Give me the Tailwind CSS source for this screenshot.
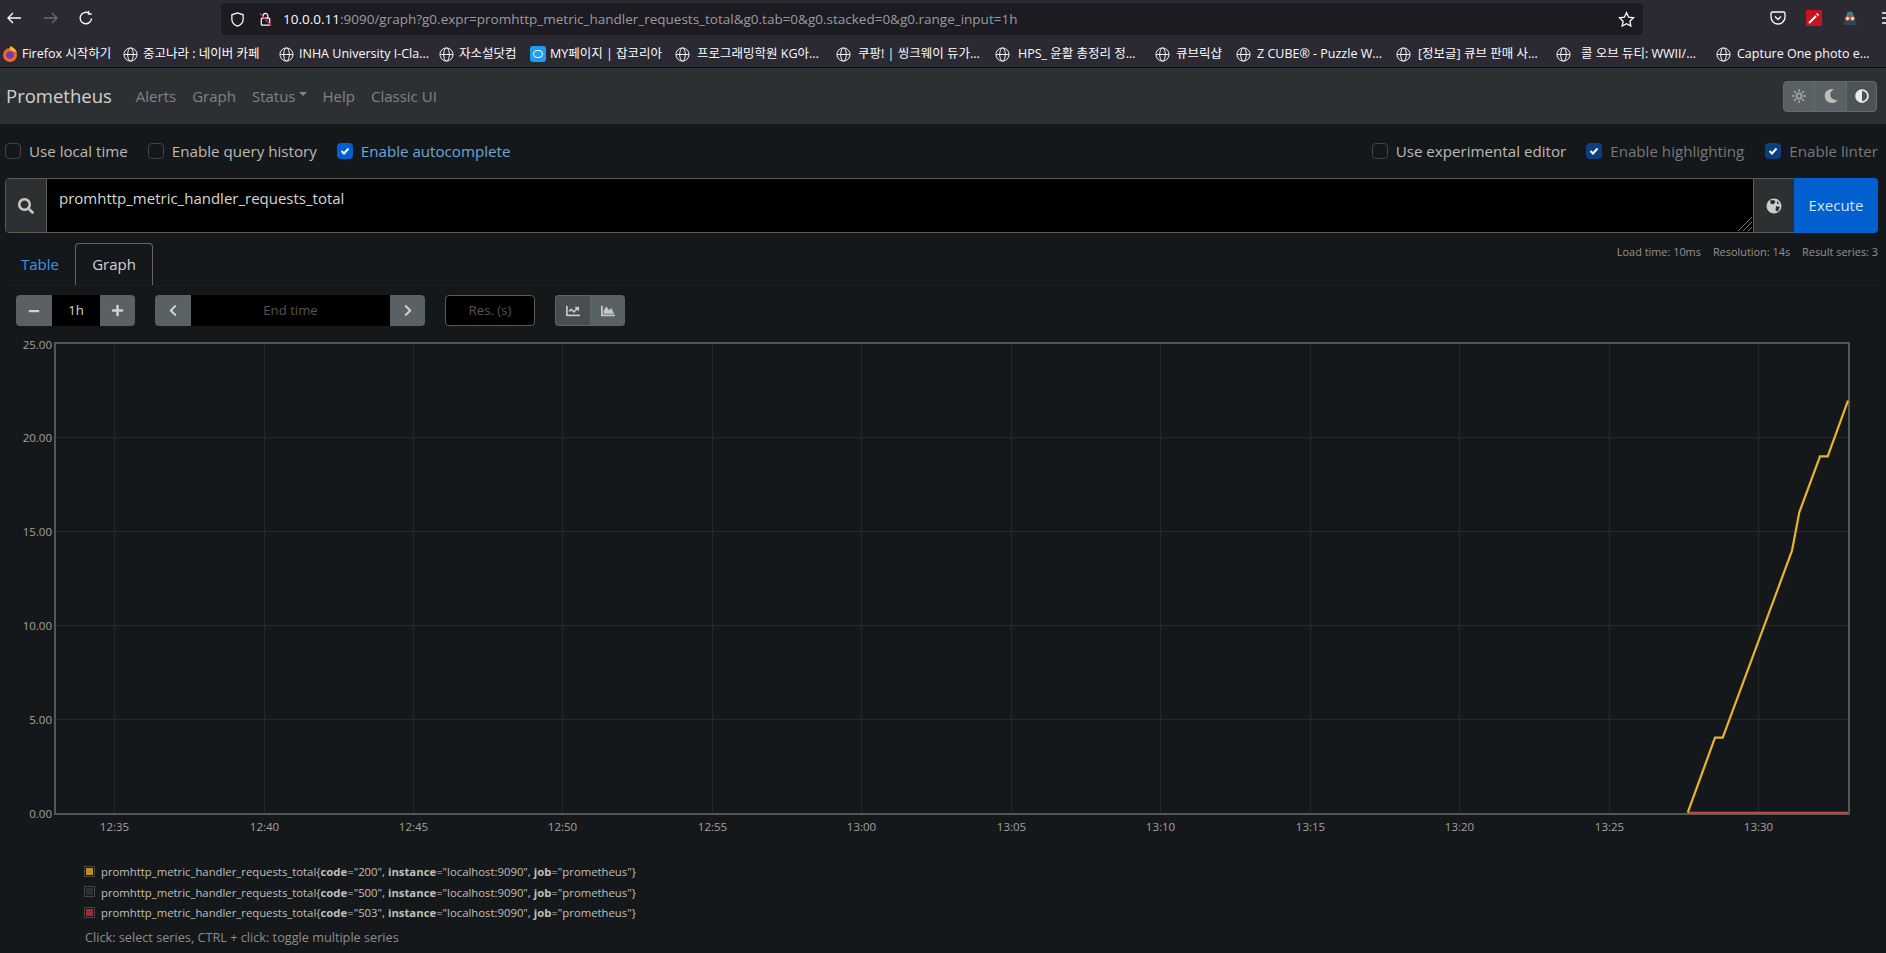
<!DOCTYPE html>
<html>
<head>
<meta charset="utf-8">
<title>Prometheus Time Series Collection and Processing Server</title>
<script src="https://cdn.jsdelivr.net/npm/@tailwindcss/browser@4"></script>
</head>
<body class="w-[1886px] h-[953px] overflow-hidden bg-[#14181b] font-['Open_Sans','Noto_Sans_CJK_KR',sans-serif] text-[#c8c6c2]">

<!-- browser toolbar -->
<div class="h-[35px] bg-[#2b2a33] flex items-start relative">
    <div class="w-[221px] shrink-0 h-[35px] flex items-center text-[#fbfbfe]">
        <svg class="ml-[6px] w-4 h-4" viewBox="0 0 16 16" fill="none" stroke="currentColor" stroke-width="1.4"><path d="M15 8H2M7 3 2 8l5 5"/></svg>
        <svg class="ml-[21px] w-4 h-4 text-[#6b6a72]" viewBox="0 0 16 16" fill="none" stroke="currentColor" stroke-width="1.4"><path d="M1 8h13M9 3l5 5-5 5"/></svg>
        <svg class="ml-[19px] w-4 h-4" viewBox="0 0 16 16" fill="none" stroke="currentColor" stroke-width="1.4"><path d="M13.5 8.5A5.7 5.7 0 1 1 11 3.3M10.5 1v3h3.2"/></svg>
    </div>
    <div class="mt-[3px] w-[1422px] shrink-0 h-[32px] rounded-[4px] bg-[#1c1b22] flex items-center">
        <svg class="ml-[9px] w-[15px] h-[15px] text-[#fbfbfe]" viewBox="0 0 16 16" fill="none" stroke="currentColor" stroke-width="1.3"><path d="M8 1 2 3v5c0 3.500 3 6 6 7 3-1 6-3.500 6-7V3z"/></svg>
        <svg class="ml-[13px] w-[15px] h-4" viewBox="0 0 16 16" fill="none"><rect x="3.500" y="7" width="9" height="7.500" rx="1" stroke="#fbfbfe" stroke-width="1.300"/><path d="M5.500 7V4.500a2.500 2.500 0 0 1 5 0V7" stroke="#fbfbfe" stroke-width="1.300"/><path d="M2 2l12 13" stroke="#e22850" stroke-width="1.500"/></svg>
        <div class="ml-[10px] text-[13.5px] whitespace-nowrap text-[#9b9aa0]"><span class="text-[#fbfbfe]">10.0.0.11</span>:9090/graph?g0.expr=promhttp_metric_handler_requests_total&amp;g0.tab=0&amp;g0.stacked=0&amp;g0.range_input=1h</div>
        <svg class="ml-auto mr-[8px] w-[17px] h-[17px] text-[#fbfbfe]" viewBox="0 0 16 16" fill="none" stroke="currentColor" stroke-width="1.200"><path d="m8 1.500 2 4.300 4.600.6-3.400 3.200.9 4.600L8 11.900l-4.100 2.300.9-4.600L1.400 6.400 6 5.800z"/></svg>
    </div>
    <div class="flex items-center h-[35px] shrink-0">
        <svg class="ml-[127px] w-4 h-4 text-[#fbfbfe]" viewBox="0 0 16 16" fill="none" stroke="currentColor" stroke-width="1.300"><path d="M2.500 2h11A1.500 1.500 0 0 1 15 3.500V7a7 7 0 0 1-14 0V3.500A1.500 1.500 0 0 1 2.500 2z"/><path d="m5 6.500 3 3 3-3"/></svg>
        <div class="ml-5 w-4 h-4 bg-[#c8141e] flex items-center justify-center">
            <svg class="w-3 h-3" viewBox="0 0 12 12" fill="none" stroke="#fff" stroke-width="2"><path d="M1 11 8 4"/><path d="M9 1v2M11 3H9" stroke-width="1"/></svg>
        </div>
        <svg class="ml-5 w-4 h-4" viewBox="0 0 16 16"><path d="M1 15c0-4 2-6 7-6s7 2 7 6z" fill="#1f4a5c"/><circle cx="8" cy="5" r="3.500" fill="#3d7d92"/><circle cx="5.500" cy="8.500" r="2.200" fill="#e8d8c8" stroke="#b5402a"/><circle cx="10.500" cy="8.500" r="2.200" fill="#e8d8c8" stroke="#b5402a"/></svg>
        <svg class="ml-[24px] w-4 h-4 text-[#fbfbfe]" viewBox="0 0 16 16" stroke="currentColor" stroke-width="1.300"><path d="M0 3h16M0 8h16M0 13h16"/></svg>
    </div>
</div>

<!-- bookmarks -->
<div class="h-[33px] bg-[#2b2a33] border-b border-[#0c0c0e] flex items-center pl-[2px] pt-[6px] text-[12.5px] text-[#fbfbfe] whitespace-nowrap overflow-hidden">
    <div class="w-[121px] flex items-center gap-[4px]">
        <svg class="w-4 h-4 shrink-0" viewBox="0 0 16 16"><circle cx="8" cy="9" r="7" fill="#f7661f"/><path d="M8 0c3 1 6 3 7 7-2-2-5-3-7-2z" fill="#ffbd2e"/><circle cx="8" cy="9" r="3.800" fill="#6a3bc4"/></svg>
        <span>Firefox 시작하기</span>
    </div>
    <div class="w-[156px] flex items-center gap-[5px]">
        <svg class="w-[15px] h-[15px] shrink-0" viewBox="0 0 16 16" fill="none" stroke="#fbfbfe"><circle cx="8" cy="8" r="7"/><ellipse cx="8" cy="8" rx="3" ry="7"/><path d="M1 8h14"/></svg>
        <span>중고나라 : 네이버 카페</span>
    </div>
    <div class="w-[160px] flex items-center gap-[5px]">
        <svg class="w-[15px] h-[15px] shrink-0" viewBox="0 0 16 16" fill="none" stroke="#fbfbfe"><circle cx="8" cy="8" r="7"/><ellipse cx="8" cy="8" rx="3" ry="7"/><path d="M1 8h14"/></svg>
        <span>INHA University I-Cla...</span>
    </div>
    <div class="w-[91px] flex items-center gap-[5px]">
        <svg class="w-[15px] h-[15px] shrink-0" viewBox="0 0 16 16" fill="none" stroke="#fbfbfe"><circle cx="8" cy="8" r="7"/><ellipse cx="8" cy="8" rx="3" ry="7"/><path d="M1 8h14"/></svg>
        <span>자소설닷컴</span>
    </div>
    <div class="w-[145px] flex items-center gap-[4px]">
        <div class="w-4 h-4 shrink-0 rounded-[3px] bg-[#1e9df0] flex items-center justify-center"><div class="w-[10px] h-[8px] rounded-full border border-white"></div></div>
        <span>MY페이지 | 잡코리아</span>
    </div>
    <div class="w-[161px] flex items-center gap-[7px]">
        <svg class="w-[15px] h-[15px] shrink-0" viewBox="0 0 16 16" fill="none" stroke="#fbfbfe"><circle cx="8" cy="8" r="7"/><ellipse cx="8" cy="8" rx="3" ry="7"/><path d="M1 8h14"/></svg>
        <span>프로그래밍학원 KG아...</span>
    </div>
    <div class="w-[159px] flex items-center gap-[7px]">
        <svg class="w-[15px] h-[15px] shrink-0" viewBox="0 0 16 16" fill="none" stroke="#fbfbfe"><circle cx="8" cy="8" r="7"/><ellipse cx="8" cy="8" rx="3" ry="7"/><path d="M1 8h14"/></svg>
        <span>쿠팡! | 씽크웨이 듀가...</span>
    </div>
    <div class="w-[160px] flex items-center gap-[8px]">
        <svg class="w-[15px] h-[15px] shrink-0" viewBox="0 0 16 16" fill="none" stroke="#fbfbfe"><circle cx="8" cy="8" r="7"/><ellipse cx="8" cy="8" rx="3" ry="7"/><path d="M1 8h14"/></svg>
        <span>HPS_ 윤활 총정리 정...</span>
    </div>
    <div class="w-[81px] flex items-center gap-[6px]">
        <svg class="w-[15px] h-[15px] shrink-0" viewBox="0 0 16 16" fill="none" stroke="#fbfbfe"><circle cx="8" cy="8" r="7"/><ellipse cx="8" cy="8" rx="3" ry="7"/><path d="M1 8h14"/></svg>
        <span>큐브릭샵</span>
    </div>
    <div class="w-[160px] flex items-center gap-[6px]">
        <svg class="w-[15px] h-[15px] shrink-0" viewBox="0 0 16 16" fill="none" stroke="#fbfbfe"><circle cx="8" cy="8" r="7"/><ellipse cx="8" cy="8" rx="3" ry="7"/><path d="M1 8h14"/></svg>
        <span>Z CUBE® - Puzzle W...</span>
    </div>
    <div class="w-[160px] flex items-center gap-[7px]">
        <svg class="w-[15px] h-[15px] shrink-0" viewBox="0 0 16 16" fill="none" stroke="#fbfbfe"><circle cx="8" cy="8" r="7"/><ellipse cx="8" cy="8" rx="3" ry="7"/><path d="M1 8h14"/></svg>
        <span>[정보글] 큐브 판매 사...</span>
    </div>
    <div class="w-[160px] flex items-center gap-[10px]">
        <svg class="w-[15px] h-[15px] shrink-0" viewBox="0 0 16 16" fill="none" stroke="#fbfbfe"><circle cx="8" cy="8" r="7"/><ellipse cx="8" cy="8" rx="3" ry="7"/><path d="M1 8h14"/></svg>
        <span>콜 오브 듀티: WWII/...</span>
    </div>
    <div class="flex items-center gap-[6px]">
        <svg class="w-[15px] h-[15px] shrink-0" viewBox="0 0 16 16" fill="none" stroke="#fbfbfe"><circle cx="8" cy="8" r="7"/><ellipse cx="8" cy="8" rx="3" ry="7"/><path d="M1 8h14"/></svg>
        <span>Capture One photo e...</span>
    </div>
</div>

<!-- navbar -->
<nav class="h-[56px] bg-[#2c3033] flex items-center pl-[6px] pr-[9px] text-[15px] text-[#7f8487]">
    <span class="text-[18.5px] text-[#d4d2ce] mr-[24px] mb-px">Prometheus</span>
    <a class="mr-[16px]">Alerts</a>
    <a class="mr-[16px]">Graph</a>
    <a class="flex items-center mr-[16px]">Status<span class="ml-[3px] mb-[4px] border-x-[4px] border-t-[4px] border-x-transparent border-t-[#7f8487]"></span></a>
    <a class="mr-[16px]">Help</a>
    <a>Classic UI</a>
    <div class="ml-auto flex h-[31px] w-[94px] rounded-[4px] border border-[#6b6862] bg-[#5a6164]">
        <div class="w-[31px] flex items-center justify-center border-r border-[#6b6862] text-[#a8a49c]">
            <svg class="w-[14px] h-[14px]" viewBox="0 0 16 16" fill="currentColor" stroke="currentColor"><circle cx="8" cy="8" r="3" fill="none" stroke-width="2"/><path d="M8 0v3M8 13v3M0 8h3M13 8h3M2.300 2.300l2.200 2.200M11.500 11.500l2.200 2.200M2.300 13.700l2.200-2.200M11.500 4.500l2.200-2.200" stroke-width="1.800"/></svg>
        </div>
        <div class="w-[32px] flex items-center justify-center border-r border-[#6b6862] text-[#c2bdb2]">
            <svg class="w-[14px] h-[14px]" viewBox="0 0 512 512" fill="currentColor"><path d="M283.211 512c78.962 0 151.079-35.925 198.857-94.792 7.068-8.708-.639-21.43-11.562-19.35-124.203 23.654-238.262-71.576-238.262-196.954 0-72.222 38.662-138.635 101.498-174.394 9.686-5.512 7.25-20.197-3.756-22.23A258.156 258.156 0 0 0 283.211 0c-141.309 0-256 114.511-256 256 0 141.309 114.511 256 256 256z"/></svg>
        </div>
        <div class="flex-1 flex items-center justify-center bg-[#4c5356] rounded-r-[4px] text-[#ecebe8]">
            <svg class="w-[14px] h-[14px]" viewBox="0 0 512 512" fill="currentColor"><path d="M8 256c0 136.966 111.033 248 248 248s248-111.034 248-248S392.966 8 256 8 8 119.033 8 256zm248 184V72c101.705 0 184 82.311 184 184 0 101.705-82.311 184-184 184z"/></svg>
        </div>
    </div>
</nav>

<!-- query options -->
<div class="h-[54px] flex items-center pl-[5px] pr-[8px] text-[15.15px]">
    <div class="flex items-center mr-[20px]">
        <span class="w-4 h-4 rounded-[4px] border border-[#3f4447] mr-[8px]"></span><span class="text-[#bdbab5]">Use local time</span>
    </div>
    <div class="flex items-center mr-[20px]">
        <span class="w-4 h-4 rounded-[4px] border border-[#3f4447] mr-[8px]"></span><span class="text-[#bdbab5]">Enable query history</span>
    </div>
    <div class="flex items-center">
        <span class="w-4 h-4 rounded-[4px] bg-[#0060d0] mr-[8px] flex items-center justify-center"><svg class="w-[10px] h-[10px]" viewBox="0 0 10 10" fill="none" stroke="#fff" stroke-width="2"><path d="m1.500 5 2.500 2.500 4.500-5"/></svg></span><span class="text-[#6ea6d8]">Enable autocomplete</span>
    </div>
    <div class="ml-auto flex items-center mr-[20px]">
        <span class="w-4 h-4 rounded-[4px] border border-[#3f4447] mr-[8px]"></span><span class="text-[#bdbab5]">Use experimental editor</span>
    </div>
    <div class="flex items-center mr-[21px]">
        <span class="w-4 h-4 rounded-[4px] bg-[#0b3f80] mr-[8px] flex items-center justify-center"><svg class="w-[10px] h-[10px]" viewBox="0 0 10 10" fill="none" stroke="#fff" stroke-width="2"><path d="m1.500 5 2.500 2.500 4.500-5"/></svg></span><span class="text-[#77797a]">Enable highlighting</span>
    </div>
    <div class="flex items-center">
        <span class="w-4 h-4 rounded-[4px] bg-[#0b3f80] mr-[8px] flex items-center justify-center"><svg class="w-[10px] h-[10px]" viewBox="0 0 10 10" fill="none" stroke="#fff" stroke-width="2"><path d="m1.500 5 2.500 2.500 4.500-5"/></svg></span><span class="text-[#77797a]">Enable linter</span>
    </div>
</div>

<!-- expression input -->
<div class="mx-[5px] w-[1873px] h-[55px] flex rounded-[4px] border border-[#5f5a50] bg-black">
    <div class="w-[41px] bg-[#2c3033] border-r border-[#5f5a50] rounded-l-[4px] flex items-center justify-center text-[#c8c6c2]">
        <svg class="w-4 h-4" viewBox="0 0 512 512" fill="currentColor"><path d="M505 442.7L405.3 343c-4.500-4.500-10.600-7-17-7H372c27.600-35.300 44-79.700 44-128C416 93.100 322.900 0 208 0S0 93.100 0 208s93.100 208 208 208c48.300 0 92.700-16.400 128-44v16.300c0 6.400 2.500 12.500 7 17l99.700 99.700c9.400 9.400 24.600 9.400 33.900 0l28.300-28.300c9.400-9.400 9.400-24.600.1-34zM208 336c-70.700 0-128-57.200-128-128 0-70.700 57.200-128 128-128 70.700 0 128 57.200 128 128 0 70.700-57.200 128-128 128z"/></svg>
    </div>
    <div class="flex-1 relative pl-[12px] pt-[7px] text-[15px] leading-[24px] text-[#d8d6d2]">
        promhttp_metric_handler_requests_total
        <svg class="absolute right-[1px] bottom-[1px] w-[14px] h-[14px]" viewBox="0 0 14 14" stroke="#77756f"><path d="M0 14 14 0M5 14l9-9M10 14l4-4"/></svg>
    </div>
    <div class="w-[41px] bg-[#2c3033] border-l border-[#5f5a50] flex items-center justify-center">
        <svg class="w-4 h-4" viewBox="0 0 16 16"><circle cx="8" cy="8" r="7.500" fill="#d0cec9"/><path d="M4 2.500 8 2l1.500 2L7 6.500 4.500 5.500zM10 8l4 1-2 4.500-2.500-1zM11 3l2.500 2.500L11 6z" fill="#2c3033"/></svg>
    </div>
    <div class="w-[84px] -my-px -mr-px bg-[#0060d0] rounded-r-[4px] flex items-center justify-center text-[15px] text-[#d4e2f4]">Execute</div>
</div>

<!-- tabs -->
<div class="mt-[10px] h-[42px] flex pl-[5px] pr-[8px] text-[15px]">
    <a class="w-[70px] flex items-center justify-center text-[#3b94e6]">Table</a>
    <a class="w-[78px] flex items-center justify-center rounded-t-[4px] border border-b-0 border-[#6b6658] text-[#d4d2ce]">Graph</a>
    <div class="ml-auto flex gap-[12px] pt-[1px] text-[10.9px] leading-[16px] text-[#96928a]">
        <span>Load time: 10ms</span>
        <span>Resolution: 14s</span>
        <span>Result series: 3</span>
    </div>
</div>

<div class="mx-[5px] border-t border-[#1b2023]"></div>

<!-- graph controls -->
<div class="mt-[9px] h-[31px] flex pl-[16px] text-[13.2px]">
    <div class="flex w-[119px] rounded-[4px] overflow-hidden bg-black">
        <div class="w-[36px] bg-[#5a6164] flex items-center justify-center text-[#d4d2ce]"><svg class="w-[12px] h-[12px]" viewBox="0 0 448 512" fill="currentColor"><path d="M416 208H32c-17.670 0-32 14.330-32 32v32c0 17.670 14.330 32 32 32h384c17.670 0 32-14.330 32-32v-32c0-17.670-14.330-32-32-32z"/></svg></div>
        <div class="flex-1 flex items-center justify-center text-[#d8d6d2]">1h</div>
        <div class="w-[35px] bg-[#5a6164] flex items-center justify-center text-[#d4d2ce]"><svg class="w-[13px] h-[13px]" viewBox="0 0 448 512" fill="currentColor"><path d="M416 208H272V64c0-17.670-14.330-32-32-32h-32c-17.670 0-32 14.330-32 32v144H32c-17.670 0-32 14.330-32 32v32c0 17.670 14.330 32 32 32h144v144c0 17.670 14.330 32 32 32h32c17.670 0 32-14.330 32-32V304h144c17.670 0 32-14.330 32-32v-32c0-17.670-14.330-32-32-32z"/></svg></div>
    </div>
    <div class="ml-[20px] flex w-[270px] rounded-[4px] overflow-hidden bg-black">
        <div class="w-[36px] bg-[#5a6164] flex items-center justify-center text-[#d4d2ce]"><svg class="w-[12px] h-[13px]" viewBox="0 0 320 512" fill="currentColor"><path d="M34.520 239.030L228.870 44.690c9.370-9.370 24.570-9.370 33.940 0l22.670 22.670c9.360 9.360 9.370 24.520.04 33.900L131.490 256l154.020 154.750c9.340 9.380 9.320 24.540-.04 33.900l-22.670 22.670c-9.370 9.370-24.570 9.370-33.940 0L34.520 272.970c-9.370-9.370-9.370-24.570 0-33.940z"/></svg></div>
        <div class="flex-1 flex items-center justify-center text-[#56544f]">End time</div>
        <div class="w-[35px] bg-[#5a6164] flex items-center justify-center text-[#d4d2ce]"><svg class="w-[12px] h-[13px]" viewBox="0 0 320 512" fill="currentColor"><path d="M285.476 272.971L91.132 467.314c-9.373 9.373-24.569 9.373-33.941 0l-22.667-22.667c-9.357-9.357-9.375-24.522-.04-33.901L188.505 256 34.484 101.255c-9.335-9.379-9.317-24.544.04-33.901l22.667-22.667c9.373-9.373 24.569-9.373 33.941 0L285.475 239.030c9.373 9.372 9.373 24.568.001 33.941z"/></svg></div>
    </div>
    <div class="ml-[20px] w-[90px] rounded-[4px] border border-[#5f5a50] bg-black flex items-center justify-center text-[#56544f]">Res. (s)</div>
    <div class="ml-[20px] flex w-[70px] rounded-[4px] overflow-hidden bg-[#5a6164] text-[#c8c6c2]">
        <div class="w-[36px] bg-[#474d50] border border-[#5f6467] rounded-l-[4px] flex items-center justify-center"><svg class="w-[14px] h-[14px]" viewBox="0 0 512 512" fill="currentColor"><path d="M496 384H64V80c0-8.840-7.160-16-16-16H16C7.160 64 0 71.160 0 80v336c0 17.670 14.330 32 32 32h464c8.840 0 16-7.160 16-16v-32c0-8.840-7.160-16-16-16zM464 96H345.940c-21.380 0-32.090 25.850-16.970 40.970l32.400 32.400L288 242.750l-73.370-73.370c-12.500-12.500-32.760-12.500-45.250 0l-68.690 68.690c-6.250 6.250-6.250 16.380 0 22.630l22.620 22.620c6.250 6.250 16.380 6.250 22.630 0L192 237.250l73.370 73.370c12.500 12.500 32.760 12.500 45.250 0l96-96 32.400 32.400c15.120 15.120 40.970 4.410 40.970-16.970V112c.01-8.840-7.150-16-15.990-16z"/></svg></div>
        <div class="flex-1 flex items-center justify-center"><svg class="w-[14px] h-[14px]" viewBox="0 0 512 512" fill="currentColor"><path d="M500 384c6.600 0 12 5.400 12 12v40c0 6.600-5.400 12-12 12H12c-6.600 0-12-5.400-12-12V76c0-6.600 5.400-12 12-12h40c6.600 0 12 5.400 12 12v308h436zM372.700 159.500L288 216l-85.300-113.700c-5.100-6.800-15.500-6.300-19.900 1L96 248v104h384l-89.900-187.800c-3.200-6.500-11.400-8.700-17.400-4.700z"/></svg></div>
    </div>
</div>

<!-- chart -->
<svg class="mt-[10px] block w-[1886px] h-[504px]" viewBox="0 336 1886 504" font-family="'Open Sans',sans-serif" font-size="11.500" fill="#a5a29b">
    <g stroke="#25292c" stroke-width="1">
        <path d="M55 437.500H1848M55 531.500H1848M55 625.500H1848M55 719.500H1848"/>
        <path d="M114.500 343V813M264.500 343V813M413.500 343V813M562.500 343V813M712.500 343V813M861.500 343V813M1011.500 343V813M1160.500 343V813M1310.500 343V813M1459.500 343V813M1609.500 343V813M1758.500 343V813"/>
    </g>
    <rect x="55" y="343" width="1794" height="471" fill="none" stroke="#555555" stroke-width="2"/>
    <path d="M1688 812.700H1848" stroke="#c9484a" stroke-width="2" fill="none"/>
    <path d="M1687.700 812.700 1715 737.700H1722.700L1792 550.700 1799.300 512.300 1820 456.300H1827.700L1848 400.700" stroke="#e5b52e" stroke-width="2.200" fill="none"/>
    <g text-anchor="end">
        <text x="52" y="349">25.00</text>
        <text x="52" y="442">20.00</text>
        <text x="52" y="536">15.00</text>
        <text x="52" y="630">10.00</text>
        <text x="52" y="724">5.00</text>
        <text x="52" y="818">0.00</text>
    </g>
    <g text-anchor="middle">
        <text x="114.500" y="831">12:35</text>
        <text x="264.500" y="831">12:40</text>
        <text x="413.500" y="831">12:45</text>
        <text x="562.500" y="831">12:50</text>
        <text x="712.500" y="831">12:55</text>
        <text x="861.500" y="831">13:00</text>
        <text x="1011.500" y="831">13:05</text>
        <text x="1160.500" y="831">13:10</text>
        <text x="1310.500" y="831">13:15</text>
        <text x="1459.500" y="831">13:20</text>
        <text x="1609.500" y="831">13:25</text>
        <text x="1758.500" y="831">13:30</text>
    </g>
</svg>

<!-- legend -->
<div class="mt-[22px] pl-[84px] text-[11.32px] leading-[20px] text-[#c2bfb9]">
    <div class="flex items-center h-[20px]">
        <span class="w-[11px] h-[11px] mr-[6px] mb-[2px] p-px border border-[#44484a]"><span class="block w-full h-full bg-[#b8901a]"></span></span>
        <span>promhttp_metric_handler_requests_total{<b>code</b>="200", <b>instance</b>="localhost:9090", <b>job</b>="prometheus"}</span>
    </div>
    <div class="flex items-center h-[21px]">
        <span class="w-[11px] h-[11px] mr-[6px] mb-[2px] p-px border border-[#44484a]"><span class="block w-full h-full bg-[#2c3033]"></span></span>
        <span>promhttp_metric_handler_requests_total{<b>code</b>="500", <b>instance</b>="localhost:9090", <b>job</b>="prometheus"}</span>
    </div>
    <div class="flex items-center h-[20px]">
        <span class="w-[11px] h-[11px] mr-[6px] mb-[2px] p-px border border-[#44484a]"><span class="block w-full h-full bg-[#a32b2f]"></span></span>
        <span>promhttp_metric_handler_requests_total{<b>code</b>="503", <b>instance</b>="localhost:9090", <b>job</b>="prometheus"}</span>
    </div>
    <div class="mt-[4px] h-[20px] pl-px text-[12.7px] text-[#8f8c85]">Click: select series, CTRL + click: toggle multiple series</div>
</div>

</body>
</html>
